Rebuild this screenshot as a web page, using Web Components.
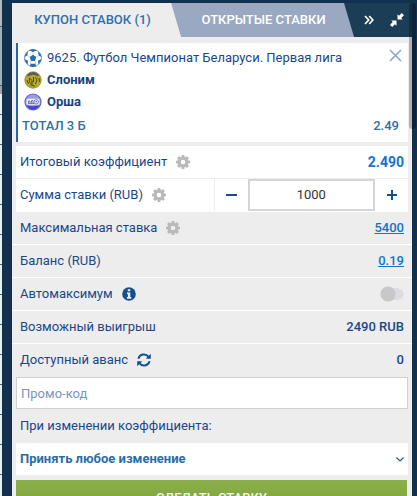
<!DOCTYPE html>
<html lang="ru">
<head>
<meta charset="UTF-8">
<meta name="viewport" content="width=device-width, initial-scale=1">
<title>Купон ставок</title>
<style>
  html, body {
    margin: 0;
    height: 100%;
    overflow: hidden;
  }
  body {
    background: #11314f;
    color: #1a4789;
    font: 13px/16px Roboto, "Liberation Sans", sans-serif;
  }
</style>
</head>
<body>
<bet-sidebar>
  <coupon-tabs slot="tabs"></coupon-tabs>
  <bet-event number="9625" league="Футбол Чемпионат Беларуси. Первая лига" home="Слоним" away="Орша" market="ТОТАЛ 3 Б" odds="2.49"></bet-event>
  <coupon-row white icon="gear" label="Итоговый коэффициент"><strong>2.490</strong></coupon-row>
  <stake-row></stake-row>
  <coupon-row icon="gear" label="Максимальная ставка"><a href="#max">5400</a></coupon-row>
  <coupon-row label="Баланс (RUB)"><a href="#balance">0.19</a></coupon-row>
  <coupon-row icon="info" label="Автомаксимум"><toggle-switch label="Автомаксимум"></toggle-switch></coupon-row>
  <coupon-row label="Возможный выигрыш">2490 RUB</coupon-row>
  <coupon-row last icon="refresh" label="Доступный аванс">0</coupon-row>
  <coupon-footer></coupon-footer>
</bet-sidebar>

<script>
const gearTeeth = [0, 45, 90, 135].map(a => `<rect x="5.4" y="0" width="3.2" height="14" rx="0.8" transform="rotate(${a} 7 7)"/>`).join('');

const icons = {
  gear: `<svg width="14" height="14" viewBox="0 0 14 14" fill="#b9b9b9">
      <mask id="hole"><rect width="14" height="14" fill="#fff"/><circle cx="7" cy="7" r="2.3" fill="#000"/></mask>
      <g mask="url(#hole)"><circle cx="7" cy="7" r="5.3"/>${gearTeeth}</g>
    </svg>`,
  info: `<svg width="14" height="14" viewBox="0 0 14 14">
      <circle cx="7" cy="7" r="6.8" fill="#14508f"/>
      <path d="M5.8 2.2h2.5v2.1H5.8zM4.9 5.5h3.4v4.6h1v1.6H4.9v-1.6h1V7.1h-1z" fill="#ededed"/>
    </svg>`,
  refresh: `<svg width="14" height="14" viewBox="0 0 14 14">
      <path d="M1.4 5.7A5.8 5.8 0 0 1 11.6 3.8M12.6 8.3A5.8 5.8 0 0 1 2.4 10.2" fill="none" stroke="#14508f" stroke-width="2"/>
      <path d="M13.8.7v5.1H8.7zM.2 13.3V8.2h5.1z" fill="#14508f"/>
    </svg>`
};

class BetSidebar extends HTMLElement {
  constructor() {
    super();
    this.attachShadow({ mode: 'open' }).innerHTML = `
      <style>
        :host {
          display: flex;
          box-sizing: border-box;
          height: 100vh;
          padding: 3px 5px 0 0;
          overflow: hidden;
          position: relative;
        }
        .edge {
          flex: none;
          width: 2px;
          margin: -3px 10px 0 0;
          background:
            linear-gradient(#b5b8b4 0 26px, #476478 26px 27px, #a5b0b4 27px 85px, #476478 85px 86px, #a5a39d 86px 94px, transparent 94px),
            repeating-linear-gradient(transparent 0 24px, #476478 24px 25px, transparent 25px 30px),
            #e8eef2;
        }
        main {
          flex: 1;
          min-width: 0;
          background: #ededed;
        }
        .thumb {
          position: absolute;
          top: 3px;
          right: 1px;
          width: 7px;
          height: 126px;
          border-radius: 4px;
          background: rgba(0, 0, 0, 0.25);
        }
      </style>
      <div class="edge"></div>
      <main><slot name="tabs"></slot><slot></slot></main>
      <div class="thumb"></div>
    `;
  }
}

class CouponTabs extends HTMLElement {
  constructor() {
    super();
    this.attachShadow({ mode: 'open' }).innerHTML = `
      <style>
        :host {
          display: flex;
          height: 34px;
          margin-bottom: 6px;
          background: #1b3e56;
        }
        button {
          border: 0;
          padding: 0;
          background: none;
          color: #fff;
          font: 500 13px/34px Roboto, "Liberation Sans", sans-serif;
          white-space: nowrap;
          cursor: pointer;
        }
        .tabs {
          flex: 1;
          display: flex;
          background: #9aa9c1;
          clip-path: polygon(0 0, calc(100% - 10px) 0, 100% 100%, 0 100%);
        }
        .coupon {
          flex: 169;
          padding-right: 8px;
          background: #ededed;
          color: #2f70aa;
          clip-path: polygon(0 0, calc(100% - 10px) 0, 100% 100%, 0 100%);
        }
        .open {
          flex: 173;
          padding-right: 8px;
        }
        .tools {
          flex: none;
          display: flex;
          align-items: center;
          gap: 16px;
          padding: 0 8px 0 10px;
        }
        .tools button {
          display: flex;
        }
      </style>
      <div class="tabs">
        <button class="coupon">КУПОН СТАВОК (1)</button>
        <button class="open">ОТКРЫТЫЕ СТАВКИ</button>
      </div>
      <div class="tools">
        <button aria-label="Скрыть"><svg width="10" height="10" viewBox="0 0 10 10"><path d="M1 1l3.7 4L1 9M5.2 1l3.7 4-3.7 4" fill="none" stroke="#fff" stroke-width="1.7"/></svg></button>
        <button aria-label="Свернуть"><svg width="14" height="14" viewBox="0 0 14 14" fill="#fff"><path d="M7.5 1.3v5.2h5.2l-1.500-1.500L14 2.200 11.800 0 9 2.800zM6.500 12.700V7.500H1.300L2.800 9 0 11.800 2.200 14 5 11.200z"/></svg></button>
      </div>
    `;
  }
}

class BetEvent extends HTMLElement {
  connectedCallback() {
    const get = name => this.getAttribute(name);
    this.attachShadow({ mode: 'open' }).innerHTML = `
      <style>
        :host {
          display: block;
          margin: 0 4px 4px;
          padding: 4px 4px 5px;
          border-left: 2px solid #2767a5;
          background: #fff;
        }
        .line {
          display: flex;
          align-items: center;
          gap: 5px;
          height: 22px;
          padding: 0 2px;
        }
        .line svg {
          flex: none;
        }
        .league {
          flex: 1;
          white-space: nowrap;
        }
        .team {
          font-weight: 700;
          color: #184580;
        }
        button {
          display: flex;
          align-self: flex-start;
          border: 0;
          padding: 2px 0 0;
          background: none;
        }
        .total {
          display: flex;
          justify-content: space-between;
          padding-right: 5px;
          font-weight: 500;
          line-height: 26px;
          height: 24px;
          color: #316fa9;
        }
      </style>
      <div class="line">
        <svg width="18" height="18" viewBox="0 0 18 18">
          <circle cx="9" cy="9" r="8.500" fill="#fff" stroke="#4d83b8" stroke-width=".8"/>
          <path d="M9 5.700l3.300 2.400-1.300 3.900H7L5.700 8.100zM4.800 1.300L9 3l4.200-1.700L9 .2zM.5 8l2.700-1.600.9-3.700L1.500 5zM17.500 8l-2.700-1.600-.9-3.700L16.500 5zM3.800 15.200l.2-3.500L.6 10l.8 2.800zM14.200 15.200l-.2-3.500 3.400-1.700-.8 2.800zM6 17.400l.5-2.700h5l.5 2.700L9 17.900z" fill="#2b6cab"/>
          <path d="M9 5.700V3M12.300 8.100l2.500-1.700M11 12l.8 3M7 12l-.8 3M5.700 8.100L3.200 6.400" stroke="#8fb2d4" stroke-width=".6"/>
        </svg>
        <span class="league">${get('number')}. ${get('league')}</span>
        <button aria-label="Удалить"><svg width="13" height="13" viewBox="0 0 13 13"><path d="M1 1l11 11M12 1L1 12" stroke="#8ba6c6" stroke-width="1.600"/></svg></button>
      </div>
      <div class="line team">
        <svg width="18" height="18" viewBox="0 0 18 18">
          <circle cx="9" cy="9" r="8.200" fill="#b5a82b" stroke="#8d8433" stroke-width=".8"/>
          <path d="M3 4q6-6 12 0l-1.500 1.500Q9 2 4.500 5.500z" fill="#5a5768"/>
          <path d="M5.500 7v4l2.500 2.500V9.500zM9.500 6v5M11.500 6.500l1.500 2.500-1.500 4M3 9l1.500 4M15 7l.6 4M6.500 14l4.500 1" fill="none" stroke="#4b4a22" stroke-width="1"/>
        </svg>
        ${get('home')}
      </div>
      <div class="line team">
        <svg width="18" height="18" viewBox="0 0 18 18">
          <circle cx="9" cy="9" r="8" fill="#9d9be0" stroke="#6563cf" stroke-width="1.200"/>
          <path d="M2.200 12q6.800 2.500 13.600 0Q13 16.800 9 16.800T2.200 12" fill="#4543cd"/>
          <rect x="2.500" y="5.800" width="13" height="6" rx="1" fill="#f1f1fb"/>
          <path d="M4.500 10V8h1.500v2M7.500 10V7.500H9V10M4 10.500h6" fill="none" stroke="#6a69b5" stroke-width=".9"/>
          <circle cx="12.200" cy="8.800" r="2.200" fill="#fff" stroke="#555590" stroke-width=".8"/>
          <circle cx="12.200" cy="8.800" r=".8" fill="#444480"/>
        </svg>
        ${get('away')}
      </div>
      <div class="total"><span>${get('market')}</span><span>${get('odds')}</span></div>
    `;
  }
}

class CouponRow extends HTMLElement {
  connectedCallback() {
    this.attachShadow({ mode: 'open' }).innerHTML = `
      <style>
        :host {
          display: flex;
          align-items: center;
          gap: 9px;
          height: 32px;
          padding: 0 8px;
          border-bottom: 1px solid #fff;
        }
        :host([white]) {
          margin: 0 4px;
          padding: 0 4px;
          background: #fff;
          border-color: #ededed;
        }
        :host([last]) {
          border-color: transparent;
        }
        svg {
          flex: none;
        }
        .value {
          margin-left: auto;
          font-weight: 500;
        }
        ::slotted(a) {
          color: #1474c9;
        }
        ::slotted(strong) {
          color: #1474c9;
          font-size: 14px;
          font-weight: 700;
        }
      </style>
      <span>${this.getAttribute('label')}</span>
      ${icons[this.getAttribute('icon')] || ''}
      <span class="value"><slot></slot></span>
    `;
  }
}

class StakeRow extends HTMLElement {
  constructor() {
    super();
    this.attachShadow({ mode: 'open' }).innerHTML = `
      <style>
        :host {
          display: flex;
          height: 32px;
          margin: 0 4px;
          background: #fff;
          border-bottom: 1px solid #fff;
        }
        .label {
          flex: 1;
          box-sizing: border-box;
          display: flex;
          align-items: center;
          gap: 9px;
          padding-left: 4px;
          white-space: nowrap;
          border-right: 1px solid #ededed;
        }
        .stepper {
          flex: 1;
          min-width: 0;
          display: flex;
        }
        button {
          flex: none;
          display: flex;
          align-items: center;
          justify-content: center;
          width: 33px;
          padding: 0;
          border: 0;
          background: none;
        }
        input {
          flex: 1;
          min-width: 0;
          box-sizing: border-box;
          border: 2px solid #d5d5d5;
          padding: 0;
          background: #fff;
          color: #333;
          font: 13px/16px Roboto, "Liberation Sans", sans-serif;
          text-align: center;
        }
      </style>
      <div class="label"><label for="stake">Сумма ставки (RUB)</label>${icons.gear}</div>
      <div class="stepper">
        <button aria-label="Меньше"><svg width="11" height="10"><path d="M0 5h11" stroke="#14508f" stroke-width="2"/></svg></button>
        <input id="stake" type="text" value="1000">
        <button aria-label="Больше"><svg width="10" height="10"><path d="M0 5h10M5 0v10" stroke="#14508f" stroke-width="2"/></svg></button>
      </div>
    `;
  }
}

class ToggleSwitch extends HTMLElement {
  connectedCallback() {
    this.attachShadow({ mode: 'open' }).innerHTML = `
      <style>
        :host {
          display: flex;
        }
        input {
          appearance: none;
          width: 24px;
          height: 16px;
          margin: 0;
          background:
            radial-gradient(circle at 8px 8px, #c8c8c8 7px, transparent 8px),
            linear-gradient(#dedce0, #dedce0) 8px 2px / 10px 12px no-repeat,
            radial-gradient(circle at 18px 8px, #dedce0 5px, transparent 6px);
        }
        input:checked {
          transform: scaleX(-1);
        }
      </style>
      <input type="checkbox" role="switch" aria-label="${this.getAttribute('label')}">
    `;
  }
}

class CouponFooter extends HTMLElement {
  constructor() {
    super();
    this.attachShadow({ mode: 'open' }).innerHTML = `
      <style>
        :host {
          display: flex;
          flex-direction: column;
          padding: 0 4px;
        }
        input, select {
          box-sizing: border-box;
          width: 100%;
          height: 32px;
          margin: 0;
          padding: 0 4px;
          border: 1px solid #d0d0d0;
          border-radius: 0;
          background: #fff;
          font: 13px/16px Roboto, "Liberation Sans", sans-serif;
        }
        input::placeholder {
          color: #7b95b8;
          opacity: 1;
        }
        label {
          padding-left: 4px;
          line-height: 34px;
        }
        .select {
          display: grid;
          align-items: center;
        }
        .select > * {
          grid-area: 1 / 1;
        }
        .select svg {
          justify-self: end;
          margin-right: 4px;
          pointer-events: none;
        }
        select {
          appearance: none;
          border: 0;
          color: #286dab;
          font-weight: 700;
        }
        .submit {
          height: 36px;
          margin: 5px 1px 0 0;
          padding: 0;
          border: 0;
          background: linear-gradient(#8bb049, #7aa03b);
          color: #f1f5e8;
          font: 500 13px/36px Roboto, "Liberation Sans", sans-serif;
        }
      </style>
      <input type="text" placeholder="Промо-код" aria-label="Промо-код">
      <label for="change">При изменении коэффициента:</label>
      <div class="select">
        <select id="change"><option>Принять любое изменение</option></select>
        <svg width="8" height="5" viewBox="0 0 8 5"><path d="M.5.500L4 4 7.500.5" fill="none" stroke="#31547c" stroke-width="1.200"/></svg>
      </div>
      <button class="submit">СДЕЛАТЬ СТАВКУ</button>
    `;
  }
}

customElements.define('bet-sidebar', BetSidebar);
customElements.define('coupon-tabs', CouponTabs);
customElements.define('bet-event', BetEvent);
customElements.define('coupon-row', CouponRow);
customElements.define('stake-row', StakeRow);
customElements.define('toggle-switch', ToggleSwitch);
customElements.define('coupon-footer', CouponFooter);
</script>
</body>
</html>
